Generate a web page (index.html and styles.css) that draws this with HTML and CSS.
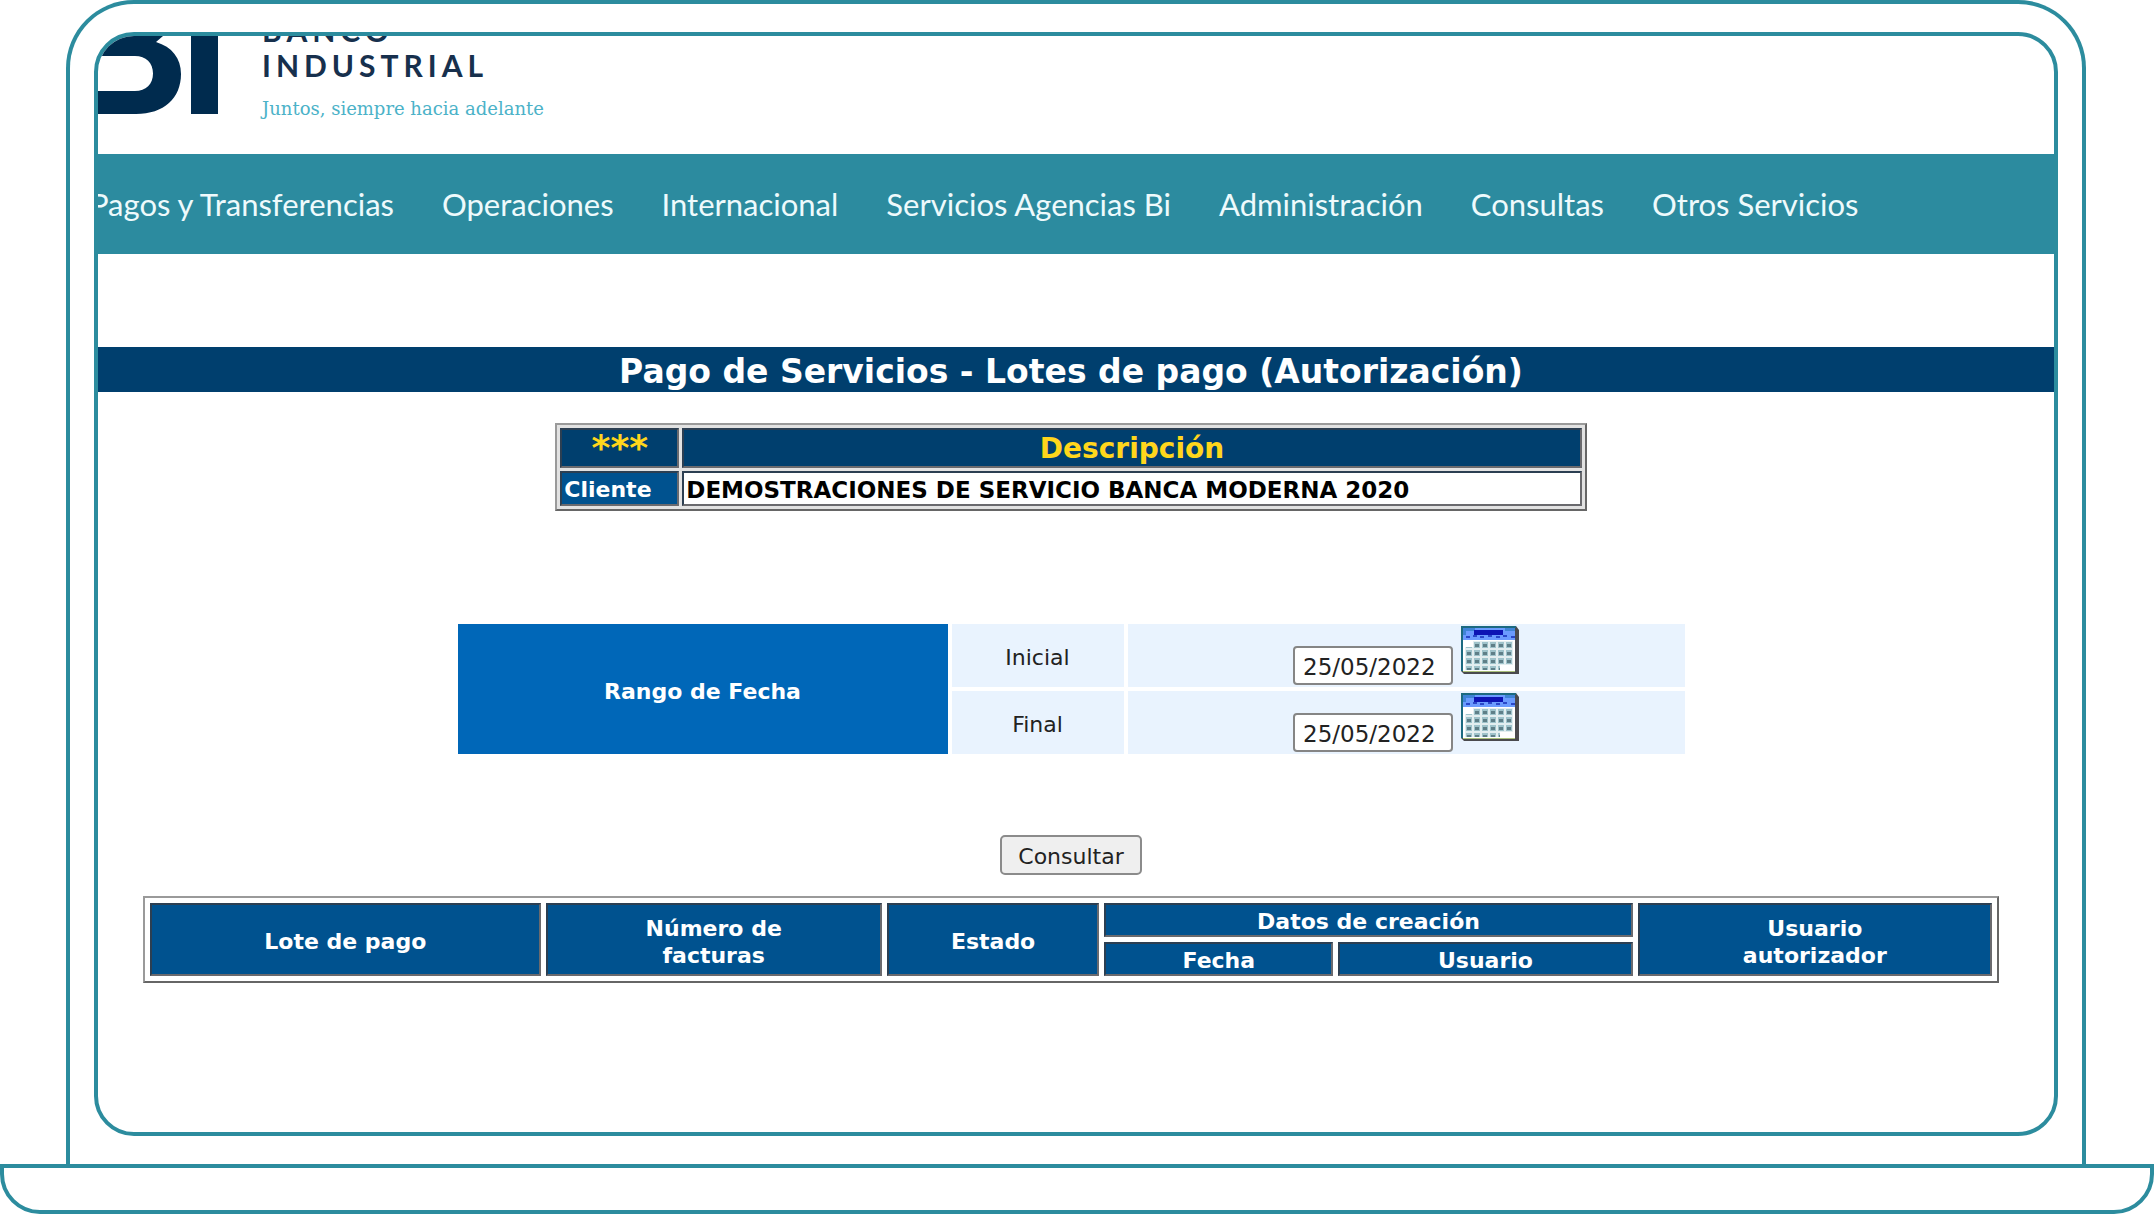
FILE: index.html
```html
<!DOCTYPE html>
<html lang="es">
<head>
<meta charset="utf-8">
<meta name="viewport" content="width=device-width, initial-scale=1">
<title>Pago de Servicios - Lotes de pago (Autorización)</title>
<link rel="stylesheet" href="styles.css">
</head>
<body>
<svg class="sprite" aria-hidden="true">
  <defs>
    <pattern id="days" width="8" height="8" patternUnits="userSpaceOnUse" x="4" y="15">
      <rect width="8" height="8" fill="#e3eef0"/>
      <rect x="1" y="1" width="6" height="6" fill="#9fc3cb"/>
      <rect x="2" y="3" width="4" height="3" fill="#5f7f88"/>
    </pattern>
  </defs>
  <symbol id="calendar" viewBox="0 0 58 48">
    <path d="M0 0H55L58 4V48H3L0 45Z" fill="#4a4a4e"/>
    <path d="M0 0H55V2H2V45H0Z" fill="#1c6a80"/>
    <rect x="2" y="2" width="52" height="43" fill="#fff"/>
    <rect x="2" y="2" width="52" height="12" fill="#6b9bff"/>
    <path d="M2 2H14V5H5V9H2ZM44 2H54V5H44Z" fill="#3f83d6"/>
    <rect x="13" y="4" width="29" height="5" fill="#0d14b4"/>
    <path d="M5 11h4m3-1h4m3 1h4m4-1h4m4 1h4m3-1h4m4 1h4" stroke="#2a48c8" stroke-width="2"/>
    <rect x="12" y="15" width="40" height="6" fill="url(#days)"/>
    <rect x="4" y="21" width="48" height="18" fill="url(#days)"/>
    <rect x="4" y="39" width="35" height="5" fill="url(#days)"/>
    <path d="M2 45.500H54" stroke="#a9bf7a"/>
  </symbol>
</svg>

<div class="laptop">
  <div class="screen">
    <header class="brand">
      <svg class="brand__mark" viewBox="0 0 120 78" role="img" aria-label="Bi">
        <path fill="#002b4e" fill-rule="evenodd" d="M0 0H65L58 6C74 11 83 22 83 38C83 62 66 78 38 78H0ZM0 20V55H37C48 55 55 48 55 37.500S48 20 37 20Z"/>
        <rect x="93" width="27" height="78" fill="#002b4e"/>
      </svg>
      <div class="brand__text">
        <div class="brand__name">BANCO<br>INDUSTRIAL</div>
        <div class="brand__tagline">Juntos, siempre hacia adelante</div>
      </div>
    </header>

    <nav class="menu" aria-label="Principal">
      <a href="#">Pagos y Transferencias</a>
      <a href="#">Operaciones</a>
      <a href="#">Internacional</a>
      <a href="#">Servicios Agencias Bi</a>
      <a href="#">Administración</a>
      <a href="#">Consultas</a>
      <a href="#">Otros Servicios</a>
    </nav>

    <main class="content">
      <h1 class="title">Pago de Servicios - Lotes de pago (Autorización)</h1>

      <table class="grid client">
        <colgroup><col class="client__key"><col></colgroup>
        <thead>
          <tr><th class="client__stars">***</th><th class="client__head">Descripción</th></tr>
        </thead>
        <tbody>
          <tr><th class="client__label" scope="row">Cliente</th><td>DEMOSTRACIONES DE SERVICIO BANCA MODERNA 2020</td></tr>
        </tbody>
      </table>

      <form class="search">
        <table class="range">
          <colgroup><col class="range__title"><col class="range__label"><col></colgroup>
          <tr>
            <th rowspan="2">Rango de Fecha</th>
            <td class="range__name"><label for="inicial">Inicial</label></td>
            <td>
              <div class="date">
                <input id="inicial" type="text" value="25/05/2022">
                <button type="button" aria-label="Elegir fecha inicial"><svg viewBox="0 0 58 48"><use href="#calendar"/></svg></button>
              </div>
            </td>
          </tr>
          <tr>
            <td class="range__name"><label for="final">Final</label></td>
            <td>
              <div class="date">
                <input id="final" type="text" value="25/05/2022">
                <button type="button" aria-label="Elegir fecha final"><svg viewBox="0 0 58 48"><use href="#calendar"/></svg></button>
              </div>
            </td>
          </tr>
        </table>
        <button class="submit" type="button">Consultar</button>
      </form>

      <table class="grid lots">
        <colgroup>
          <col class="lots__lot"><col class="lots__count"><col class="lots__state">
          <col class="lots__date"><col class="lots__user"><col>
        </colgroup>
        <thead>
          <tr>
            <th rowspan="2">Lote de pago</th>
            <th rowspan="2">Número de<br>facturas</th>
            <th rowspan="2">Estado</th>
            <th colspan="2">Datos de creación</th>
            <th rowspan="2">Usuario<br>autorizador</th>
          </tr>
          <tr><th>Fecha</th><th>Usuario</th></tr>
        </thead>
      </table>
    </main>
  </div>
</div>
<div class="base"></div>
</body>
</html>
```
FILE: styles.css
```css
* { box-sizing: border-box; }

body {
  margin: 0;
  min-height: 100vh;
  display: flex;
  flex-direction: column;
  background: #fff;
  color: #222;
  font-family: "DejaVu Sans", Verdana, sans-serif;
  font-size: 22px;
}

.sprite { position: absolute; width: 0; height: 0; }

/* Laptop outline */
.laptop {
  flex: 1;
  display: flex;
  margin: 0 68px 0 66px;
  padding: 28px 24px;
  border: 4px solid #2c8c9e;
  border-bottom: 0;
  border-radius: 68px 68px 0 0;
}
.screen {
  flex: 1;
  min-width: 0;
  overflow: hidden;
  border: 4px solid #2c8c9e;
  border-radius: 40px;
}
.base {
  height: 50px;
  border: 4px solid #2c8c9e;
  border-radius: 0 0 40px 40px;
}

/* Brand */
.brand {
  display: flex;
  gap: 44px;
  height: 118px;
}
.brand__mark { width: 120px; height: 78px; }
.brand__text { margin-top: -23px; }
.brand__name {
  color: #17304d;
  font: 700 30px/35px Lato, sans-serif;
  letter-spacing: 5px;
}
.brand__tagline {
  margin-top: 15px;
  color: #4bb2c8;
  font: 18px/22px "DejaVu Serif", serif;
}

/* Menu */
.menu {
  display: flex;
  align-items: center;
  gap: 48px;
  height: 100px;
  margin-bottom: 93px;
  background: #2c8b9f;
}
.menu a {
  color: #eefafc;
  font: 31px/40px Lato, sans-serif;
  text-decoration: none;
  white-space: nowrap;
}
.menu a:first-child { margin-left: -8px; }

/* Content */
.content {
  display: flex;
  flex-direction: column;
  align-items: center;
  padding: 0 10px 40px 0;
}
.title {
  align-self: stretch;
  margin: 0 -10px 31px 0;
  padding: 4px 10px 0 0;
  background: #003f6e;
  color: #fff;
  font-size: 33px;
  line-height: 41px;
  text-align: center;
}

.grid {
  table-layout: fixed;
  border: 2px solid;
  border-color: #9a9a9a #666 #666 #9a9a9a;
}
.grid th, .grid td {
  border: 2px solid;
  border-color: #2c3f52 #6a6a6e #6a6a6e #2c3f52;
  padding: 2px 0 0;
}
.grid th { color: #fff; }

.client {
  width: 53%;
  border-spacing: 3px;
  background: #e2e2e2;
}
.client__key { width: 119px; }
.client thead th { height: 40px; background: #003f6e; color: #ffd61c; }
.client .client__stars { padding: 0; font-size: 36px; line-height: 34px; }
.client .client__head { font-size: 28px; line-height: 34px; }
.client tbody th, .client tbody td { height: 35px; padding-left: 2px; line-height: 28px; text-align: left; }
.client tbody th { background: #00528f; }
.client tbody td {
  background: #fff;
  color: #000;
  font-size: 23px;
  font-weight: 700;
}

/* Date range */
.search {
  align-self: stretch;
  display: flex;
  flex-direction: column;
  align-items: center;
  margin: 109px 0 21px;
}
.range {
  width: 1235px;
  max-width: 100%;
  table-layout: fixed;
  border-spacing: 4px;
}
.range__title { width: 490px; }
.range__label { width: 172px; }
.range th { padding: 4px 0 0; background: #0067b8; color: #fff; }
.range td { height: 63px; padding: 0; background: #e9f3fe; text-align: center; }
.range .range__name { padding-top: 4px; }
.date {
  display: flex;
  justify-content: center;
  gap: 8px;
  height: 63px;
  padding: 2px 0;
}
.date input {
  align-self: flex-end;
  width: 160px;
  height: 39px;
  padding: 2px 8px 0;
  border: 2px solid #858585;
  border-radius: 4px;
  background: #fff;
  color: #222;
  font: 23px "DejaVu Sans", Verdana, sans-serif;
}
.date button {
  align-self: flex-start;
  width: 58px;
  height: 48px;
  padding: 0;
  border: 0;
  background: none;
}
.date svg { display: block; width: 58px; height: 48px; }
.submit {
  width: 142px;
  height: 40px;
  margin-top: 77px;
  padding: 2px 0 0;
  border: 2px solid #8b8b8b;
  border-radius: 5px;
  background: #efefef;
  color: #222;
  font: 22px "DejaVu Sans", Verdana, sans-serif;
}

/* Batches */
.lots {
  width: calc(100% - 90px);
  border-spacing: 5px;
  background: #fff;
}
.lots th { height: 34px; background: #00528f; line-height: 27px; }
.lots th[rowspan] { padding-top: 4px; }
.lots__lot { width: 21.5%; }
.lots__count { width: 18.5%; }
.lots__state { width: 11.7%; }
.lots__date { width: 12.6%; }
.lots__user { width: 16.2%; }
```
